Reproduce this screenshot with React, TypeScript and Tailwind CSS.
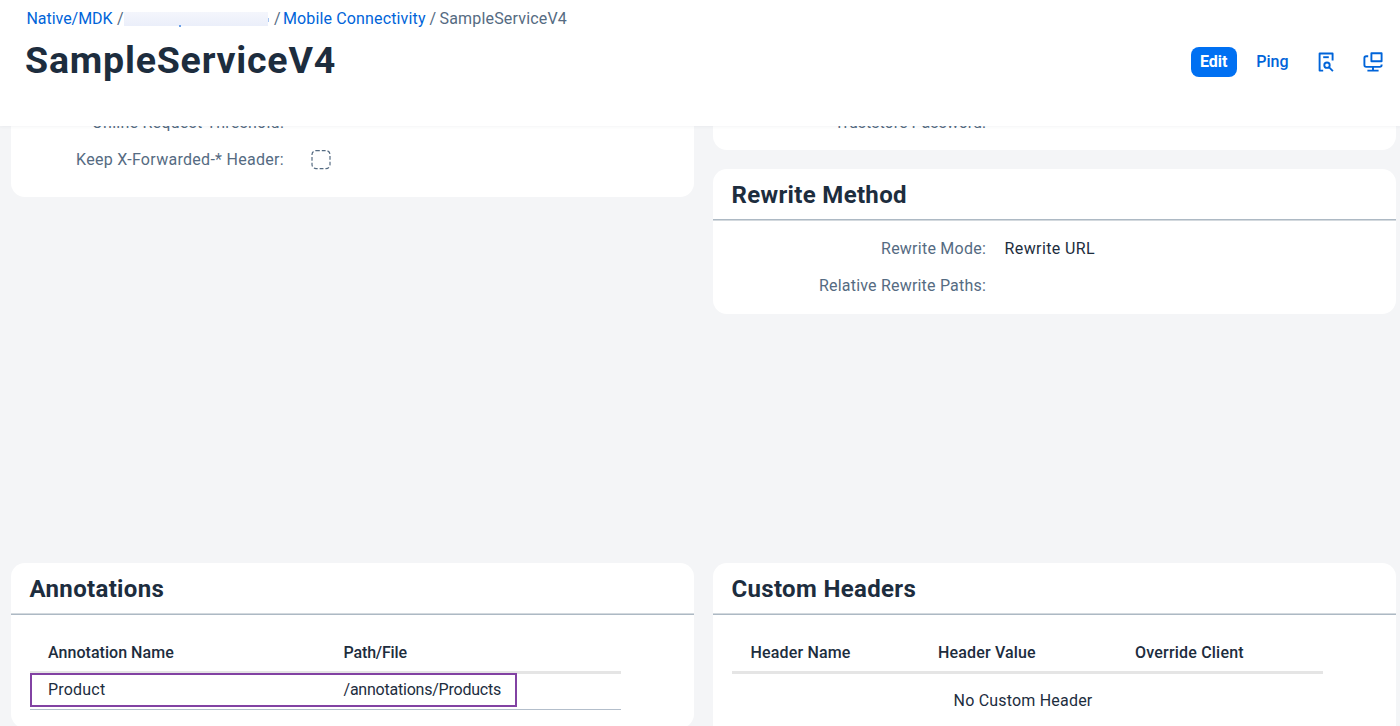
import type { ReactNode } from 'react';

type CardProps = { title?: string; rule?: string; className?: string; children?: ReactNode };

function Card({ title, rule = 'from-[#d3d9de] to-[#adb9c4]', className = '', children }: CardProps) {
  return (
    <section className={`overflow-hidden rounded-[14px] bg-white ${className}`}>
      {title && (
        <>
          <h2 className="h-[50px] pl-[18.5px] text-2xl leading-[53px] font-bold tracking-[0.33px] text-[#1d2d3e]">{title}</h2>
          <div className={`h-[2px] bg-linear-to-b from-50% to-50% ${rule}`} />
        </>
      )}
      {children}
    </section>
  );
}

function Label({ className = '', children }: { className?: string; children: ReactNode }) {
  return <div className={`w-[273px] shrink-0 text-right text-[#556b82] ${className}`}>{children}</div>;
}

function SearchDocIcon() {
  return (
    <svg className="h-5 w-4" viewBox="0 0 16 20" fill="none" stroke="#0064d9" strokeWidth="1.9" strokeLinejoin="round">
      <path d="M5.2 18.6H1.6V1.5H14.6V8.5" />
      <path d="M5.2 5.2h5.6" />
      <circle cx="9" cy="13.2" r="2.7" />
      <path d="M10.9 15.1l4 4" />
    </svg>
  );
}

function ScreensIcon() {
  return (
    <svg className="h-5 w-5" viewBox="0 0 20 20" fill="none" stroke="#0064d9" strokeWidth="1.9" strokeLinejoin="round">
      <rect x="8.4" y="1.3" width="10.2" height="7.9" />
      <path d="M5.2 4.2H3.2Q1.4 4.2 1.4 6V13.1Q1.4 14.9 3.2 14.9H16.8Q18.6 14.9 18.6 13.1V12.4" />
      <path d="M10 14.9V18.4M4.4 18.6H15.6" />
    </svg>
  );
}

export default function App() {
  return (
    <div className="flex h-[726px] w-[1400px] flex-col overflow-hidden bg-[#f4f5f7] font-['Roboto',sans-serif] text-base leading-5 whitespace-nowrap text-[#1d2d3e]">
      <header className="z-10 h-[126px] shrink-0 bg-white shadow-[0_1px_3px_rgba(34,53,72,0.05)]">
        <nav className="flex h-9 items-center pt-[2px] pl-[26.5px]">
          <span className="w-[85.5px] tracking-[-0.05px] text-[#0064d9]">Native/MDK</span>
          <span className="ml-[5px] w-[7px] text-[#556b82]">/</span>
          <span className="relative h-[14px] w-[144px] bg-linear-to-b from-[#f4f6fc] to-[#ebeffa]">
            <span className="absolute top-[13px] left-[55px] h-[2px] w-[2px] bg-[#6ba0e8]" />
            <span className="absolute top-[6px] left-[144px] h-[4px] w-[1px] bg-[#a5c4f0]" />
          </span>
          <span className="ml-[6px] w-[8px] text-[#556b82]">/</span>
          <span className="w-[143px] pl-px tracking-[0.14px] text-[#0064d9]">Mobile Connectivity</span>
          <span className="ml-[4.5px] w-[10px] text-[#556b82]">/</span>
          <span className="tracking-[0.18px] text-[#556b82]">SampleServiceV4</span>
        </nav>
        <div className="flex h-[50px] items-center justify-between pr-[17px] pl-[25px]">
          <h1 className="mb-[2px] text-[37.5px] leading-[50px] font-bold tracking-[0.8px]">SampleServiceV4</h1>
          <div className="mt-[2px] flex items-center">
            <button className="h-[30px] w-[46px] rounded-[8px] bg-[#0070f2] font-bold text-white">Edit</button>
            <button className="mr-[29.5px] ml-[19.5px] font-medium text-[#0064d9]">Ping</button>
            <SearchDocIcon />
            <span className="w-[29px]" />
            <ScreensIcon />
          </div>
        </div>
      </header>

      <main className="flex grow gap-[19px] pl-[11px]">
        <div className="flex w-[683px] flex-col">
          <Card className="-mt-5 h-[91px] shrink-0">
            <div className="flex pt-[7px]">
              <Label className="tracking-[0.25px]">Online Request Threshold:</Label>
            </div>
            <div className="flex items-center pt-[17px]">
              <Label className="tracking-[0.29px]">Keep X-Forwarded-* Header:</Label>
              <svg className="ml-[27px] h-5 w-5" viewBox="0 0 20 20" fill="none" stroke="#556b82" strokeWidth="1.2">
                <rect x="1" y="0.6" width="18" height="18" rx="4" strokeDasharray="3.8 2" />
              </svg>
            </div>
          </Card>
          <Card title="Annotations" className="mt-[366px] h-[165px] shrink-0">
            <div className="ml-[19px] w-[591px]">
              <div className="flex h-[56px] pt-[28px] pl-[18px] font-medium">
                <span className="w-[295.5px] tracking-[0.04px]">Annotation Name</span>
                <span className="tracking-[-0.15px]">Path/File</span>
              </div>
              <div className="h-[3px] bg-[#e5e5e5]" />
              <div className="relative flex h-[35px] pt-[6px] pl-[18px]">
                <span className="w-[295.5px] tracking-[0.2px]">Product</span>
                <span className="tracking-[-0.22px]">/annotations/Products</span>
                <span className="absolute top-[-1px] left-0 h-[34px] w-[487px] border-2 border-[#8242a3]" />
              </div>
              <div className="h-px bg-[#b3becb]" />
            </div>
          </Card>
        </div>

        <div className="flex w-[683px] flex-col">
          <Card className="-mt-5 h-[44px] shrink-0">
            <div className="flex pt-[7px]">
              <Label>Truststore Password:</Label>
            </div>
          </Card>
          <Card title="Rewrite Method" rule="from-[#adb9c4] to-[#d3d9de]" className="mt-[19px] h-[145px] shrink-0">
            <div className="flex pt-[18px]">
              <Label className="tracking-[0.24px]">Rewrite Mode:</Label>
              <span className="ml-[18.5px] tracking-[0.4px]">Rewrite URL</span>
            </div>
            <div className="flex pt-[17px]">
              <Label className="tracking-[0.2px]">Relative Rewrite Paths:</Label>
            </div>
          </Card>
          <Card title="Custom Headers" className="mt-[249px] h-[190px] shrink-0">
            <div className="ml-[19px] w-[591px]">
              <div className="flex h-[56px] pt-[28px] pl-[18.5px] font-medium">
                <span className="w-[187.5px] tracking-[0.16px]">Header Name</span>
                <span className="w-[197px] tracking-[0.16px]">Header Value</span>
                <span className="tracking-[0.2px]">Override Client</span>
              </div>
              <div className="h-[3px] bg-[#e5e5e5]" />
              <div className="pt-[17px] pr-[9px] text-center tracking-[0.2px]">No Custom Header</div>
            </div>
          </Card>
        </div>
      </main>
    </div>
  );
}
